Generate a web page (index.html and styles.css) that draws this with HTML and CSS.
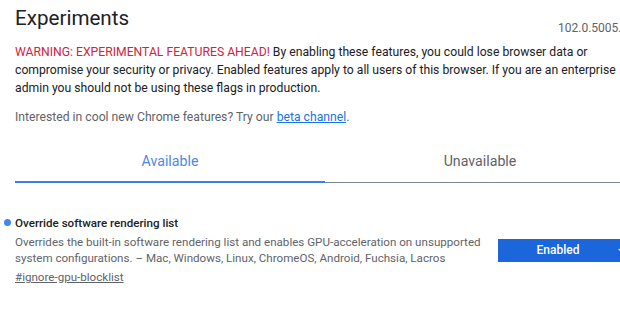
FILE: index.html
```html
<!DOCTYPE html>
<html lang="en">
<head>
<meta charset="utf-8">
<title>Experiments</title>
<link rel="stylesheet" href="styles.css">
</head>
<body>
<div class="page">
  <header class="header">
    <h1 class="title">Experiments</h1>
    <span class="version">102.0.5005.63</span>
  </header>
  <p class="blurb"><span class="warning">WARNING: EXPERIMENTAL FEATURES AHEAD!</span> By enabling these features, you could lose browser data or compromise your security or privacy. Enabled features apply to all users of this browser. If you are an enterprise admin you should not be using these flags in production.</p>
  <p class="channel">Interested in cool new Chrome features? Try our <a class="link" href="#">beta channel</a>.</p>
  <nav class="tabs">
    <div class="tab tab-active">Available</div>
    <div class="tab">Unavailable</div>
  </nav>
  <section class="experiment">
    <div class="exp-text">
      <h2 class="exp-name"><span class="dot"></span>Override software rendering list</h2>
      <p class="exp-desc">Overrides the built-in software rendering list and enables GPU-acceleration on unsupported system configurations. – Mac, Windows, Linux, ChromeOS, Android, Fuchsia, Lacros</p>
      <a class="permalink" href="#">#ignore-gpu-blocklist</a>
    </div>
    <div class="exp-control">
      <div class="select">Enabled<span class="arrow"></span></div>
    </div>
  </section>
</div>
</body>
</html>
```
FILE: styles.css
```css
html, body {
  margin: 0;
  padding: 0;
  overflow: hidden;
  background: #ffffff;
}
body {
  font-family: Roboto, "Liberation Sans", Arial, sans-serif;
  font-size: 12.2px;
  color: #202124;
}
.page {
  width: 620px;
  padding: 4px 15px 0 15px;
}
.header {
  display: flex;
  justify-content: space-between;
  align-items: flex-start;
}
.title {
  margin: 0;
  font-size: 20.6px;
  line-height: 28px;
  font-weight: 400;
  color: #202124;
}
.version {
  margin-top: 15px;
  font-size: 12px;
  line-height: 18px;
  color: #5f6368;
}
.blurb {
  margin: 6px 0 0 0;
  line-height: 18px;
  color: #202124;
}
.warning {
  color: #d4213d;
}
.channel {
  margin: 11px 0 0 0;
  line-height: 18px;
  color: #5f6368;
}
.link {
  color: #1a73e8;
  text-decoration: underline;
}
.tabs {
  display: flex;
  margin-top: 25px;
  border-bottom: 1px solid #80868b;
}
.tab {
  flex: 1;
  text-align: center;
  font-size: 14.2px;
  line-height: 20px;
  padding: 0 0 11px 0;
  color: #5f6368;
}
.tab-active {
  color: #4f86ec;
  box-shadow: inset 0 -2px 0 #3b7ded;
  margin-bottom: -1px;
  padding-bottom: 12px;
}
.experiment {
  display: flex;
  align-items: center;
  margin-top: 32px;
}
.exp-text {
  flex: 1;
  min-width: 0;
  padding-right: 12px;
  font-size: 11.6px;
}
.exp-name {
  position: relative;
  margin: 0;
  font-size: 11.6px;
  line-height: 16px;
  font-weight: 500;
  color: #202124;
}
.dot {
  position: absolute;
  left: -11px;
  top: 4px;
  width: 7px;
  height: 7px;
  border-radius: 50%;
  background: #4285f4;
}
.exp-desc {
  margin: 3px 0 0 0;
  line-height: 16px;
  color: #5f6368;
}
.permalink {
  display: inline-block;
  margin-top: 3px;
  line-height: 16px;
  color: #5f6368;
  text-decoration: underline;
}
.exp-control {
  flex: 0 0 137px;
}
.select {
  position: relative;
  height: 23px;
  line-height: 23px;
  background: #1a66da;
  color: #ffffff;
  font-weight: 500;
  font-size: 12px;
  text-align: center;
  padding-right: 17px;
}
.arrow {
  position: absolute;
  left: 120px;
  top: 10px;
  width: 0;
  height: 0;
  border-left: 4px solid transparent;
  border-right: 4px solid transparent;
  border-top: 4px solid #ffffff;
}
```
